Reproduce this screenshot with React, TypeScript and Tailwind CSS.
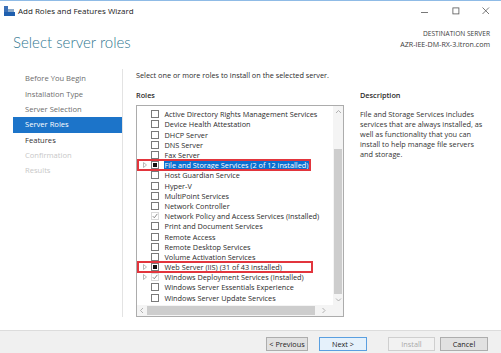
type RoleState = 'none' | 'partial' | 'checked'

interface Role {
  name: string
  state?: RoleState
  expand?: boolean
  selected?: boolean
  mark?: string
}

const ROLES: Role[] = [
  { name: 'Active Directory Rights Management Services' },
  { name: 'Device Health Attestation' },
  { name: 'DHCP Server' },
  { name: 'DNS Server' },
  { name: 'Fax Server' },
  { name: 'File and Storage Services (2 of 12 installed)', state: 'partial', expand: true, selected: true, mark: 'w-[174px]' },
  { name: 'Host Guardian Service' },
  { name: 'Hyper-V' },
  { name: 'MultiPoint Services' },
  { name: 'Network Controller' },
  { name: 'Network Policy and Access Services (Installed)', state: 'checked' },
  { name: 'Print and Document Services' },
  { name: 'Remote Access' },
  { name: 'Remote Desktop Services' },
  { name: 'Volume Activation Services' },
  { name: 'Web Server (IIS) (31 of 43 installed)', state: 'partial', expand: true, mark: 'w-[176px]' },
  { name: 'Windows Deployment Services (Installed)', state: 'checked', expand: true },
  { name: 'Windows Server Essentials Experience' },
  { name: 'Windows Server Update Services' },
]

const STEPS = [
  { label: 'Before You Begin', tone: 'text-[#6d6d6d]' },
  { label: 'Installation Type', tone: 'text-[#6d6d6d]' },
  { label: 'Server Selection', tone: 'text-[#6d6d6d]' },
  { label: 'Server Roles', tone: 'text-white bg-[#1c74c9]' },
  { label: 'Features', tone: 'text-[#333]' },
  { label: 'Confirmation', tone: 'text-[#c8c8c8]' },
  { label: 'Results', tone: 'text-[#c8c8c8]' },
]

function Checkbox({ state = 'none' }: { state?: RoleState }) {
  if (state === 'checked') {
    return (
      <svg width="8" height="8" viewBox="0 0 8 8" className="shrink-0">
        <rect x="0.5" y="0.5" width="7" height="7" fill="#fff" stroke="#d9d9d9" />
        <path d="M1.8 4.2 L3.3 5.8 L6.3 1.9" fill="none" stroke="#8a8a8a" strokeWidth="1" />
      </svg>
    )
  }
  return (
    <svg width="8" height="8" viewBox="0 0 8 8" className="shrink-0">
      <rect x="0.5" y="0.5" width="7" height="7" fill="#fff" stroke="#7a7a7a" />
      {state === 'partial' && <rect x="2" y="2" width="4" height="4" fill="#111" />}
    </svg>
  )
}

function Expander() {
  return (
    <svg width="4" height="6" viewBox="0 0 4 6" className="shrink-0">
      <path d="M0.5 0.5 L3.5 3 L0.5 5.5 Z" fill="none" stroke="#a6a6a6" strokeWidth="0.8" />
    </svg>
  )
}

function Chevron({ dir }: { dir: 'up' | 'down' | 'left' | 'right' }) {
  const d = {
    up: 'M1 4 L3.5 1.5 L6 4',
    down: 'M1 1.5 L3.5 4 L6 1.5',
    left: 'M4 1 L1.5 3.5 L4 6',
    right: 'M1.5 1 L4 3.5 L1.5 6',
  }[dir]
  const vertical = dir === 'up' || dir === 'down'
  return (
    <svg width={vertical ? 7 : 6} height={vertical ? 6 : 7} viewBox={vertical ? '0 0 7 6' : '0 0 6 7'}>
      <path d={d} fill="none" stroke="#a0a0a0" strokeWidth="0.8" />
    </svg>
  )
}

function RoleRow({ role }: { role: Role }) {
  return (
    <div className="relative flex h-[10.2px] items-center">
      <div className="flex w-[14px] shrink-0 justify-start pl-[6px]">{role.expand && <Expander />}</div>
      <Checkbox state={role.state} />
      <span
        className={
          'ml-[5px] whitespace-nowrap px-[0.5px] leading-[10px] ' +
          (role.selected ? 'bg-[#0a6fd0] text-white' : 'text-[#2b2b2b]')
        }
      >
        {role.name}
      </span>
      {role.mark && (
        <div className={'pointer-events-none absolute left-0 top-[-1.2px] h-[12.5px] border-2 border-[#e2353d] ' + role.mark} />
      )}
    </div>
  )
}

function WizardButton({ label, kind = 'normal' }: { label: string; kind?: 'normal' | 'default' | 'disabled' }) {
  const tone = {
    normal: 'bg-[#e1e1e1] border-[#adadad] text-[#222]',
    default: 'bg-[#e5f1fb] border-[#5a9fe0] text-[#222]',
    disabled: 'bg-[#f2f2f2] border-[#cfcfcf] text-[#a8a8a8]',
  }[kind]
  return (
    <button className={'flex h-[14px] w-full items-center justify-center border text-[7.3px] ' + tone}>{label}</button>
  )
}

export default function App() {
  return (
    <div className="flex h-[353px] w-[501px] flex-col overflow-hidden border-t border-[#8fbbe6] bg-white font-['Open_Sans','Noto_Sans',sans-serif] text-[7.3px]">
      {/* title bar */}
      <div className="flex h-[19px] items-center">
        <svg width="11" height="10" viewBox="0 0 11 10" className="ml-[4px]">
          <rect x="0" y="0" width="4" height="7" fill="#3b6fb6" />
          <rect x="0" y="6" width="11" height="4" fill="#1f5fae" />
          <rect x="4" y="3" width="6" height="3" fill="#8aa9c9" />
        </svg>
        <span className="ml-[3px] text-[8px] text-[#222]">Add Roles and Features Wizard</span>
        <div className="ml-auto flex items-center">
          <svg width="8" height="8" viewBox="0 0 8 8" className="mr-[23px]">
            <path d="M0 5.5 H7" stroke="#555" strokeWidth="0.8" />
          </svg>
          <svg width="8" height="8" viewBox="0 0 8 8" className="mr-[22px]">
            <rect x="0.9" y="0.9" width="6" height="6" fill="none" stroke="#555" strokeWidth="0.8" />
          </svg>
          <svg width="8" height="8" viewBox="0 0 8 8" className="mr-[11px]">
            <path d="M0.5 0.5 L7 7 M7 0.5 L0.5 7" stroke="#555" strokeWidth="0.8" />
          </svg>
        </div>
      </div>

      {/* header */}
      <div className="flex h-[45px] justify-between">
        <h1 className="ml-[13px] mt-[12px] font-['Lato','Open_Sans',sans-serif] text-[15px] font-light leading-[20px] text-[#2f7690]">
          Select server roles
        </h1>
        <div className="mr-[11px] mt-[9px] text-right text-[6.6px] leading-[10px] text-[#3a3a3a]">
          <div>DESTINATION SERVER</div>
          <div className="text-[7.1px]">AZR-IEE-DM-RX-3.itron.com</div>
        </div>
      </div>

      {/* body */}
      <div className="flex flex-1">
        <nav className="mb-[13px] mt-[4px] w-[123px] shrink-0 border-r border-[#e3e3e3] pt-[2.4px]">
          {STEPS.map((s) => (
            <div key={s.label} className={'ml-[13px] flex h-[15.3px] items-center pl-[12px] text-[7.6px] ' + s.tone}>
              {s.label}
            </div>
          ))}
        </nav>

        <main className="flex flex-1 flex-col pl-[13px] pt-[5px] text-[#2b2b2b]">
          <p className="h-[10px] leading-[10px]">Select one or more roles to install on the selected server.</p>
          <div className="mt-[10px] flex gap-[16px]">
            <section className="w-[208px] shrink-0">
              <h2 className="h-[10px] font-semibold leading-[10px]">Roles</h2>
              <div className="mt-[5px] grid h-[212px] grid-cols-[1fr_10px] grid-rows-[1fr_11px] border border-[#acacac]">
                <div className="overflow-hidden pt-[3.2px]">
                  {ROLES.map((r) => (
                    <RoleRow key={r.name} role={r} />
                  ))}
                </div>
                <div className="flex flex-col items-center bg-[#f4f4f4]">
                  <div className="flex h-[12px] items-center">
                    <Chevron dir="up" />
                  </div>
                  <div className="mt-[31px] h-[145px] w-[8px] bg-[#cdcdcd]" />
                  <div className="mt-auto flex h-[10px] items-center">
                    <Chevron dir="down" />
                  </div>
                </div>
                <div className="flex items-center bg-[#f4f4f4]">
                  <div className="flex w-[10px] justify-center">
                    <Chevron dir="left" />
                  </div>
                  <div className="h-[9px] w-[168px] bg-[#cdcdcd]" />
                  <div className="flex flex-1 justify-center">
                    <Chevron dir="right" />
                  </div>
                </div>
                <div className="bg-[#f4f4f4]" />
              </div>
            </section>

            <section className="w-[130px]">
              <h2 className="h-[10px] font-semibold leading-[10px]">Description</h2>
              <p className="mt-[9px] leading-[10px] text-[#333]">
                File and Storage Services includes
                <br />
                services that are always installed, as
                <br />
                well as functionality that you can
                <br />
                install to help manage file servers
                <br />
                and storage.
              </p>
            </section>
          </div>
        </main>
      </div>

      {/* footer */}
      <div className="flex h-[23px] shrink-0 items-start border-t border-[#dcdcdc] bg-[#f0f0f0] pr-[13px] pt-[6px]">
        <div className="ml-auto flex">
          <div className="w-[42px]">
            <WizardButton label="< Previous" />
          </div>
          <div className="ml-[11px] w-[48px]">
            <WizardButton label="Next >" kind="default" />
          </div>
          <div className="ml-[21px] w-[47px]">
            <WizardButton label="Install" kind="disabled" />
          </div>
          <div className="ml-[5px] w-[48px]">
            <WizardButton label="Cancel" />
          </div>
        </div>
      </div>
    </div>
  )
}
